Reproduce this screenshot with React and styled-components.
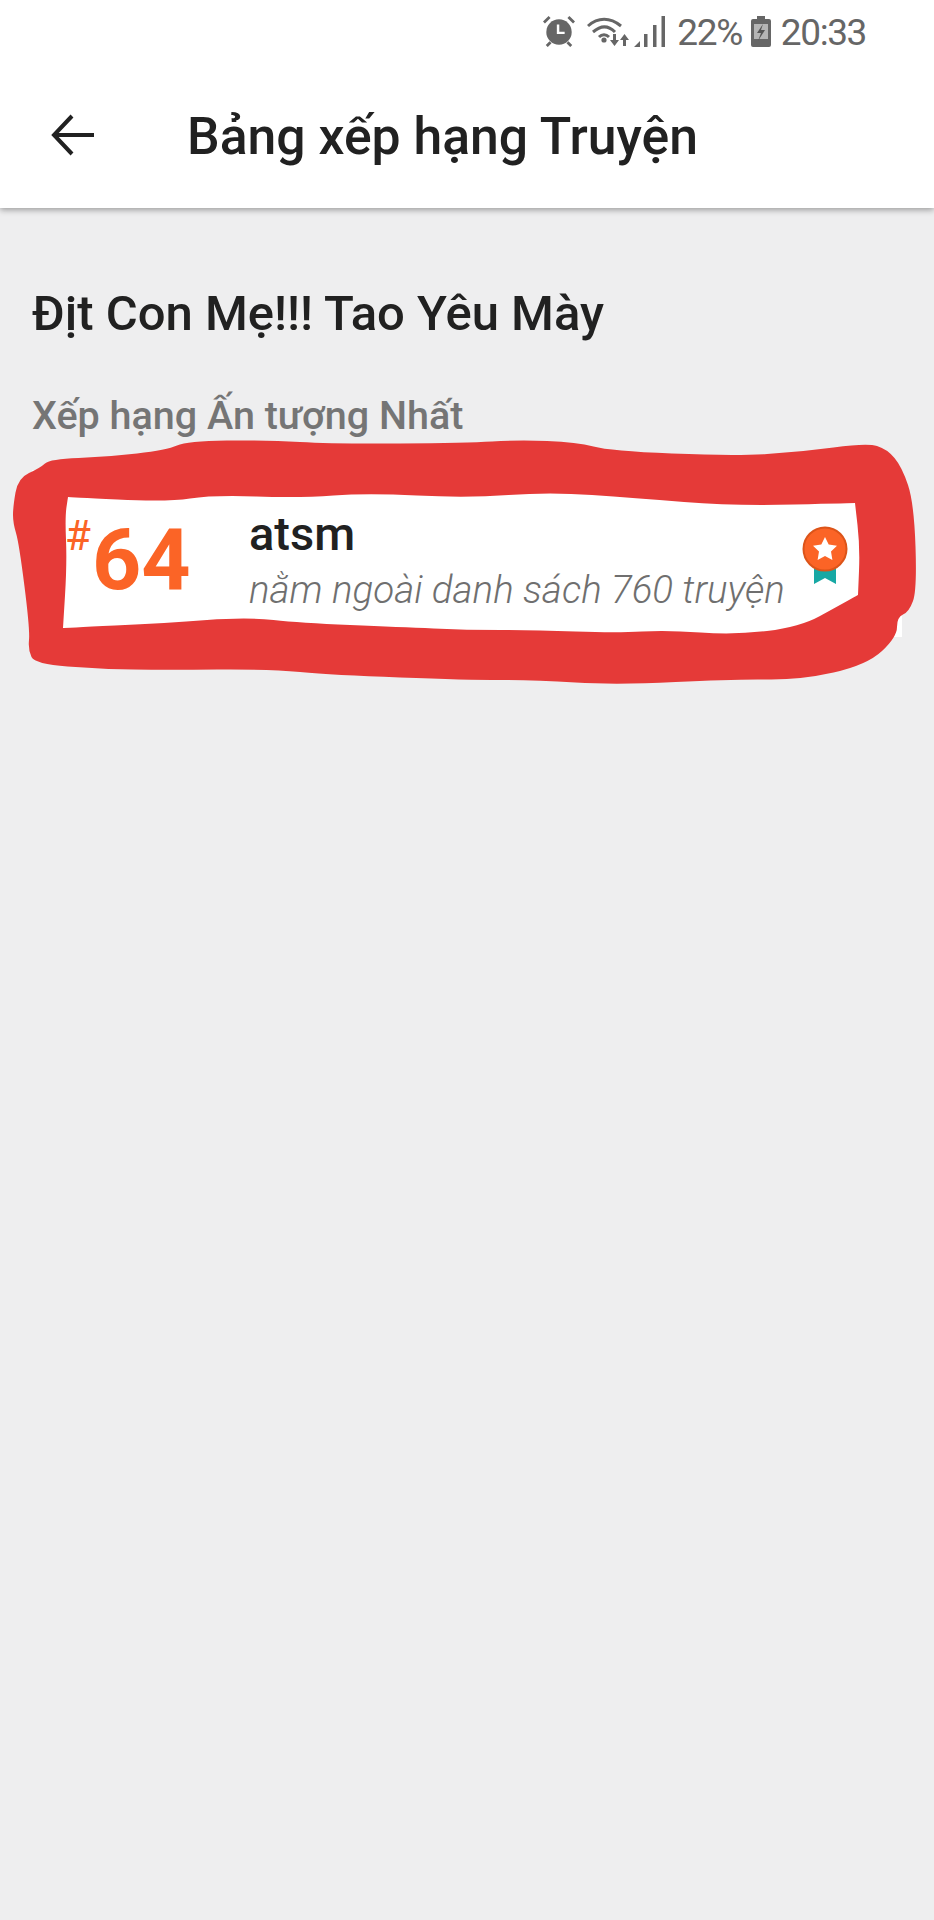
import React from 'react'
import styled, {createGlobalStyle} from 'styled-components'

const GlobalStyle = createGlobalStyle`
  html, body {
    margin: 0;
    padding: 0;
    background: #eeeeef;
    font-family: Roboto, "Noto Sans", sans-serif;
  }
`

const OUTER = [
  [13, 507], [18, 478], [40, 468], [50, 459], [107, 457], [167, 450], [187, 441], [267, 440], [333, 444], [467, 443],
  [517, 440], [577, 442], [610, 451], [734, 456], [800, 452], [867, 443], [887, 449], [902, 467], [914, 503], [917, 590],
  [909, 612], [897, 617], [897, 637], [867, 665], [800, 680], [734, 679], [617, 685], [534, 680], [467, 680], [333, 675],
  [267, 669], [167, 670], [100, 669], [35, 664], [28, 650], [30, 630], [19, 543], [13, 523],
]

// corners that are sharp in the drawing are listed twice
const INNER = [
  [68, 497], [68, 497], [167, 502], [213, 495], [300, 498], [367, 493], [467, 498], [550, 492], [634, 498], [734, 506],
  [855, 503], [855, 503], [860, 547], [858, 595], [858, 595], [840, 605], [800, 627], [734, 635], [667, 630], [617, 633],
  [534, 630], [467, 630], [400, 627], [300, 623], [247, 617], [167, 623], [63, 628], [63, 628], [67, 563], [65, 517],
]

// closes a list of points into a smooth outline through the midpoints
const smooth = points => {
  const mid = (a, b) => [(a[0] + b[0]) / 2, (a[1] + b[1]) / 2]
  const start = mid(points[points.length - 1], points[0])
  const parts = points.map((p, i) => {
    const m = mid(p, points[(i + 1) % points.length])
    return `Q${p[0]} ${p[1]} ${m[0]} ${m[1]}`
  })
  return `M${start[0]} ${start[1]}${parts.join('')}Z`
}

const AlarmIcon = () =>
  <StatusSvg $gap={0} width="32" height="32" viewBox="0 0 34 34">
    <circle cx="17" cy="18" r="13.500" fill="#666" />
    <path d="M16 10V19H23" fill="none" stroke="#fff" strokeWidth="2.600" />
    <path d="M1 8 7 2M33 8 27 2M8 29 4 33M26 29 30 33" stroke="#666" strokeWidth="3" fill="none" />
  </StatusSvg>

const WifiIcon = () =>
  <StatusSvg $gap={12} width="42" height="30" viewBox="0 0 42 30">
    <path d="M1 10C11 1 23 1 34 10M6 16C14 9 21 9 28 16M12 21C15 18 19 18 22 21" fill="none" stroke="#666" strokeWidth="3" />
    <circle cx="17" cy="24" r="2.600" fill="#666" />
    <path d="M26 18H29V24H32L27.500 30 23 24H26ZM36 30H39V24H42L37.500 18 33 24H36Z" fill="#666" />
  </StatusSvg>

const SignalIcon = () =>
  <StatusSvg $gap={5} width="31" height="31" viewBox="0 0 31 31">
    <path d="M0 31 6 25V31ZM10 18H13.500V31H10ZM19 9H22.500V31H19ZM27.500 0H31V31H27.500Z" fill="#666" />
  </StatusSvg>

const BatteryIcon = () =>
  <StatusSvg $gap={9} width="20" height="31" viewBox="0 0 20 31">
    <path d="M6 0H14V3H18Q20 3 20 5V29Q20 31 18 31H2Q0 31 0 29V5Q0 3 2 3H6Z" fill="#666" />
    <rect x="3" y="8" width="14" height="15" fill="#b5b5b5" />
    <path d="M12 8 6 17H10L7 25 14 14H10Z" fill="#555" />
  </StatusSvg>

const BackIcon = () =>
  <svg width="44" height="44" viewBox="0 0 44 44">
    <path d="M43 22H4M21 3 3 22 21 41" fill="none" stroke="#212121" strokeWidth="4" />
  </svg>

const Medal = () =>
  <svg width="46" height="58" viewBox="0 0 46 58">
    <path d="M12 36H34V58L23 52 12 58Z" fill="#17a8a4" />
    <circle cx="23" cy="23" r="21.500" fill="#fb6426" stroke="#dc5419" strokeWidth="2" />
    <path d="M23 11 26.700 18.600 35 19.800 29 25.600 30.400 34 23 30 15.600 34 17 25.600 11 19.800 19.300 18.600Z" fill="#fff" />
  </svg>

const App = () =>
  <Page>
    <GlobalStyle />
    <StatusBar>
      <AlarmIcon />
      <WifiIcon />
      <SignalIcon />
      <StatusText $gap={12}>22%</StatusText>
      <BatteryIcon />
      <StatusText $gap={10}>20:33</StatusText>
    </StatusBar>
    <AppBar>
      <BackIcon />
      <Title>Bảng xếp hạng Truyện</Title>
    </AppBar>
    <Content>
      <StoryName>Địt Con Mẹ!!! Tao Yêu Mày</StoryName>
      <SectionLabel>Xếp hạng Ấn tượng Nhất</SectionLabel>
      <RankCard>
        <Rank>
          <Hash>#</Hash>
          <RankNumber>64</RankNumber>
        </Rank>
        <Info>
          <UserName>atsm</UserName>
          <Note>nằm ngoài danh sách 760 truyện</Note>
        </Info>
        <MedalSlot>
          <Medal />
        </MedalSlot>
      </RankCard>
    </Content>
    <Scribble width="934" height="1920" viewBox="0 0 934 1920">
      <path d={`${smooth(OUTER)}${smooth(INNER)}`} fill="#e53a38" fillRule="evenodd" />
    </Scribble>
  </Page>

const Page = styled.div`
  position: relative;
  width: 934px;
  height: 1920px;
  overflow: hidden;
  background: #eeeeef;
`

const Scribble = styled.svg`
  position: absolute;
  top: 0;
  left: 0;
  pointer-events: none;
`

const StatusBar = styled.div`
  position: relative;
  z-index: 1;
  display: flex;
  align-items: center;
  justify-content: flex-end;
  height: 62px;
  padding-right: 68px;
  background: #fff;
`

const StatusSvg = styled.svg`
  flex: none;
  margin-left: ${props => props.$gap}px;
`

const StatusText = styled.span`
  margin: 4px 0 0 ${props => props.$gap}px;
  color: #666;
  font-size: 37px;
  line-height: 40px;
  letter-spacing: -1.400px;
`

const AppBar = styled.div`
  display: flex;
  align-items: center;
  height: 146px;
  padding-left: 51px;
  box-sizing: border-box;
  background: #fff;
  box-shadow: 0 2px 6px rgba(0, 0, 0, .35);
`

const Title = styled.h1`
  margin: 4px 0 0 92px;
  color: #212121;
  font-size: 51.700px;
  font-weight: 500;
  line-height: 60px;
  white-space: nowrap;
`

const Content = styled.div`
  padding: 76px 0 0 32px;
`

const StoryName = styled.h2`
  margin: 0;
  color: #212121;
  font-size: 49px;
  font-weight: 500;
  line-height: 60px;
  white-space: nowrap;
`

const SectionLabel = styled.div`
  margin-top: 50px;
  color: #757575;
  font-size: 39.500px;
  font-weight: 500;
  line-height: 44px;
  white-space: nowrap;
`

const RankCard = styled.div`
  display: flex;
  align-items: center;
  box-sizing: border-box;
  width: 870px;
  height: 167px;
  margin-top: 32px;
  padding-top: 12px;
  background: #fff;
`

const Rank = styled.div`
  display: flex;
  align-items: flex-start;
  flex: none;
  width: 217px;
  padding-left: 33px;
  box-sizing: border-box;
  color: #fb6426;
`

const Hash = styled.span`
  margin-top: -2px;
  font-size: 42px;
  line-height: 44px;
`

const RankNumber = styled.span`
  margin-left: 1px;
  font-size: 86px;
  font-weight: 700;
  line-height: 88px;
`

const Info = styled.div`
  flex: 1;
  min-width: 0;
`

const UserName = styled.div`
  color: #212121;
  font-size: 47px;
  font-weight: 500;
  line-height: 52px;
`

const Note = styled.div`
  margin-top: 8px;
  color: #6f6f6f;
  font-size: 38.500px;
  font-style: italic;
  font-weight: 300;
  line-height: 44px;
  white-space: nowrap;
`

const MedalSlot = styled.div`
  display: flex;
  flex: none;
  width: 100px;
  margin-bottom: 10px;
`

export default App
